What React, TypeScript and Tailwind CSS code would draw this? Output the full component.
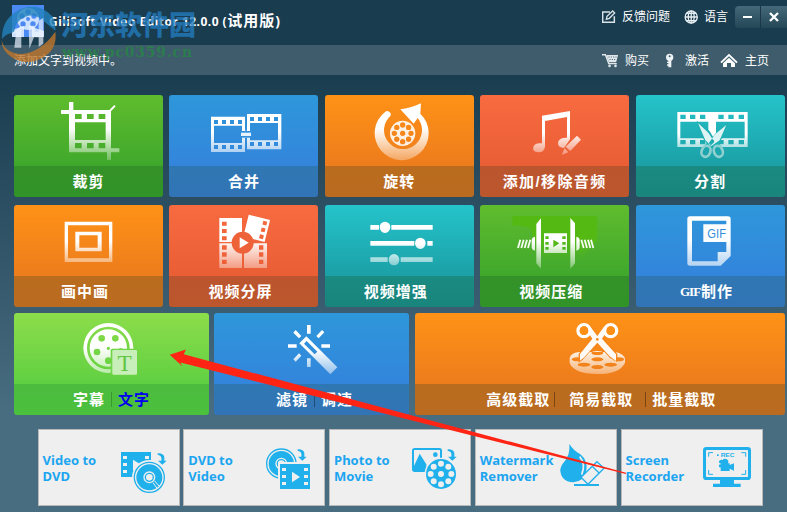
import React from "react";

/* Path helpers: icon art is drawn on a grid of three units per pixel. */
const r = (x: number, y: number, w: number, h: number) => `M${x} ${y}h${w}v${h}h${-w}z`;
const c = (x: number, y: number, q: number, qy: number = q) =>
  `M${x - q} ${y}a${q} ${qy} 0 1 0 ${2 * q} 0a${q} ${qy} 0 1 0 ${-2 * q} 0z`;
const holes = (xs: number[], y: number, w: number, h: number) => xs.map((x) => r(x, y, w, h)).join("");

function Fade({ id, y1, y2, end }: { id: string; y1: number; y2: number; end: number }) {
  return (
    <linearGradient id={id} gradientUnits="userSpaceOnUse" x1="0" x2="0" y1={y1} y2={y2}>
      <stop offset="0" stopColor="#fff" />
      <stop offset="0.45" stopColor="#fff" />
      <stop offset="1" stopColor="#fff" stopOpacity={end} />
    </linearGradient>
  );
}

const tones = {
  green: "from-[#5fbc2d] to-[#3fa82c]",
  blue: "from-[#2e97da] to-[#3385dc]",
  orange: "from-[#ff9216] to-[#ed7c1c]",
  red: "from-[#f86b41] to-[#ea5e35]",
  teal: "from-[#25c3cb] to-[#1ba0a6]",
  lime: "from-[#8cdd4a] to-[#5fd042]",
};
const feet = {
  green: "from-[#349129] to-[#319427]",
  blue: "from-[#2f77b2] to-[#3274b7]",
  orange: "from-[#b96c1e] to-[#bb6b20]",
  red: "from-[#bb552f] to-[#bc562c]",
  teal: "from-[#1a8b82] to-[#19857d]",
  lime: "from-[#4cbb3e] to-[#4bc13d]",
};

type TileProps = {
  tone: keyof typeof tones;
  box: string;
  id: string;
  fade: [number, number, number];
  label: React.ReactNode;
  pad?: string;
  children: React.ReactNode;
};

function Tile({ tone, box, id, fade, label, pad = "", children }: TileProps) {
  return (
    <div className="flex h-[102px] min-w-0 flex-col overflow-hidden rounded-[3px]">
      <div className={`h-[71px] bg-linear-to-b ${tones[tone]}`}>
        <svg viewBox={box} className="block h-[71px] w-full" fill={`url(#${id})`} fillRule="evenodd">
          <defs>
            <Fade id={id} y1={fade[0]} y2={fade[1]} end={fade[2]} />
          </defs>
          {children}
        </svg>
      </div>
      <div
        className={`flex h-[31px] items-center justify-center whitespace-nowrap bg-linear-to-b text-[15px] font-bold leading-none tracking-[1px] text-white ${feet[tone]} ${pad}`}
      >
        {label}
      </div>
    </div>
  );
}

function Sep({ className }: { className: string }) {
  return <span className={`h-[15px] w-px bg-black/35 ${className}`} />;
}

function Card({ first, second, box, children }: { first: string; second: string; box: string; children: React.ReactNode }) {
  return (
    <div className="flex h-[77px] w-[142px] shrink-0 items-center border border-[#b9b9b9] bg-[#efefef]">
      <div className="w-[80px] whitespace-nowrap pl-1 pt-px font-['Noto_Sans','Open_Sans',sans-serif] text-[13px] font-bold leading-4 text-[#1ca5f0]">
        {first}
        <br />
        {second}
      </div>
      <svg viewBox={box} className="block h-[75px] w-[60px] shrink-0" fill="#20b0ec" fillRule="evenodd">
        {children}
      </svg>
    </div>
  );
}

function SmallArrow({ x, y }: { x: number; y: number }) {
  return (
    <path
      transform={`translate(${x} ${y})`}
      d="M0 0Q17 -1 20 11V22H27L14 34L1 22H11Q14 6 0 4z"
    />
  );
}

const reel = [0, 1, 2, 3, 4, 5, 6, 7].map((i) => (i * Math.PI) / 4);

export default function App() {
  return (
    <div className="relative flex h-[512px] w-[787px] flex-col overflow-hidden bg-linear-to-b from-[#1b3d50] from-15% to-[#486c80] to-80% font-['Liberation_Sans','Noto_Sans_CJK_SC',sans-serif] text-xs text-white">
      <header className="flex h-[45px] shrink-0 bg-[#1a3c4f]">
        <div className="ml-3 mt-[5px] h-8 w-8 bg-[#4c8af3]">
          <svg viewBox="0 0 32 32" className="h-8 w-8" fill="#eef5ff" fillRule="evenodd">
            <path d={c(16, 14, 11) + c(16, 14, 2) + c(16, 7, 2.7) + c(22, 11, 2.7) + c(21, 19, 2.7) + c(11, 19, 2.7) + c(10, 11, 2.7)} opacity=".8" />
            <path d="M0 25L12 21V32H0zM20 22L32 26V32H20z" opacity=".8" />
          </svg>
        </div>
        <h1 className="ml-[5px] mt-[10px] w-[250px] whitespace-nowrap font-['Noto_Sans','Noto_Sans_CJK_SC',sans-serif] text-xs font-bold leading-5">
          <span className="tracking-[0.48px]">GiliSoft Video Editor 12.0.0 (</span>
          <span className="text-[15px] tracking-[1px]">试用版</span>
          <span className="text-sm">)</span>
        </h1>
        <div className="ml-auto flex w-[185px]">
          <nav className="flex h-[34px] w-[137px] items-center whitespace-nowrap">
            <svg viewBox="66 30 60 42" className="h-[14px] w-5 shrink-0" fill="none" stroke="#d8e2e7" strokeWidth="4.5">
              <path d="M90 36H68V67H103V49" />
              <path d="M79 58L81 49L98 33L104 39L88 55Z" strokeWidth="4" />
            </svg>
            <span>反馈问题</span>
            <svg viewBox="309 28 61 42" className="ml-3.5 h-[14px] w-5 shrink-0" fill="none" stroke="#e6eef1" strokeWidth="4">
              <circle cx="331" cy="49" r="18.5" />
              <ellipse cx="331" cy="49" rx="9" ry="18" />
              <path d="M331 30V68M312 49H350M316 38H346M316 60H346" />
            </svg>
            <span>语言</span>
          </nav>
          <div className="mt-1.5 flex h-[22px] shrink-0 text-white">
            <button className="flex w-[26px] items-center justify-center rounded-bl rounded-tl border-r border-[#193747] bg-linear-to-b from-[#456979] to-[#244758]">
              <span className="h-0.5 w-[9px] bg-white" />
            </button>
            <button className="flex w-[26px] items-center justify-center bg-linear-to-b from-[#456979] to-[#244758]">
              <svg viewBox="0 0 10 10" className="h-2.5 w-2.5" stroke="#fff" strokeWidth="2.3">
                <path d="M1 1L9 9M9 1L1 9" />
              </svg>
            </button>
          </div>
        </div>
      </header>

      <div className="flex h-[30px] shrink-0 items-center bg-[#3f5c6c] pl-3.5">
        <span className="pt-0.5">添加文字到视频中。</span>
        <nav className="ml-auto flex w-[185px] items-center pt-px">
          <svg viewBox="66 159 70 45" className="h-[15px] w-[23px] shrink-0" fill="#dfe7ea">
            <path d="M66 162H78L88 189H111V193H85L75 166H66z" />
            <path d={"M79 165H115L109 187H87z" + r(86, 169, 3, 3) + r(93, 169, 3, 3) + r(100, 169, 3, 3) + r(107, 169, 3, 3) + r(89, 177, 3, 3) + r(96, 177, 3, 3) + r(103, 177, 3, 3)} fillRule="evenodd" />
            <circle cx="89" cy="198" r="4" />
            <circle cx="107" cy="198" r="4" />
          </svg>
          <span>购买</span>
          <svg viewBox="254 159 63 45" className="ml-[15px] h-[15px] w-[21px] shrink-0" fill="#edf2f4" fillRule="evenodd">
            <path d={c(271, 172, 11) + c(271, 169, 3)} />
            <path d="M267 180H276V202H267V197H263V193H267V189H263V185H267z" />
          </svg>
          <span>激活</span>
          <svg viewBox="422 159 75 45" className="ml-[11px] h-[15px] w-[25px] shrink-0" fill="#fff">
            <path d="M449 161L475 186L471 190L449 169L427 190L423 186z" />
            <path d="M431 190L449 173L467 190V201H455V189H443V201H431z" />
          </svg>
          <span>主页</span>
        </nav>
      </div>

      <main className="flex flex-col pl-3.5 pr-0.5 pt-5">
        <div className="grid grid-cols-[149px_149px_149px_149px_149px] gap-x-[6.4px] gap-y-2">
          <Tile tone="green" box="42 15 447 213" id="crop" fade={[36, 210, 0.25]} label="裁剪">
            <path d={"M207 36H220V60H328L343 45L347 49L333 64V175H358V187H333V210H321V187H207V72H183V60H207z" + r(225, 97, 92, 53) + holes([225, 261, 296], 72, 20, 15) + holes([225, 261, 296], 159, 20, 16)} />
          </Tile>
          <Tile tone="blue" box="507 15 447 213" id="merge" fade={[72, 188, 0.6]} label="合并">
            <path d={"M633 80H735V122H741V72H844V178H741V143H735V186H633z" + r(642, 107, 84, 52) + r(750, 99, 84, 52) + holes([642, 666, 690, 714], 90, 12, 12) + holes([642, 666, 690, 714], 165, 12, 12) + holes([750, 774, 798, 822], 81, 12, 12) + holes([750, 774, 798, 822], 156, 12, 12)} />
            <rect x="718" y="123" width="39" height="20" fill="#318fdb" />
            <rect x="723" y="128" width="30" height="10" fill="#e8f2fc" />
          </Tile>
          <Tile tone="orange" box="21 15 447 213" id="rotate" fade={[40, 205, 0.35]} label="旋转">
            <path d="M202 65Q210 60 218 70V77A57 57 0 1 0 299 84L287 101L247 58Q276 55 309 40L307 71A81 81 0 1 1 202 65z" />
            <path d={c(254, 130, 38) + c(254, 130, 8) + reel.map((a) => c(254 + 25 * Math.cos(a), 130 + 25 * Math.sin(a), 8)).join("")} fill="#fff" opacity=".88" />
          </Tile>
          <Tile tone="red" box="486 15 447 213" id="audio" fade={[62, 210, 0.2]} label={<span className="tracking-[1.4px]">添加/移除音频</span>}>
            <path d="M672 77L756 63V148L738 174Q719 172 720 158Q723 142 747 143V81L681 93V170Q678 188 660 187Q642 185 646 171Q650 157 672 160z" />
            <path d="M777 137L789 149L757 183L743 170zM740 175L751 187L731 195z" opacity=".95" />
          </Tile>
          <Tile tone="teal" box="18 15 447 213" id="split" fade={[66, 210, 0.3]} label="分割">
            <path d={r(142, 66, 211, 105) + r(151, 95, 84, 50) + r(258, 95, 86, 50) + holes([151, 180, 210, 265, 295, 326], 74, 16, 13) + holes([151, 180, 210, 265, 295, 326], 150, 16, 13)} />
            <path d="M200 92L238 122L249 140L260 126L294 96L284 133L266 160L276 171H220L230 160L209 131Z" fill="#1fb0b5" />
            <path d="M238 95H258V118L249 135L238 118z" fill="#fff" />
            <path d="M204 99L235 128L253 156L243 166L226 151zM289 105L256 132L235 161L244 168L269 151z" fill="#fff" opacity=".85" />
            <g fill="none" stroke="#8fd0d0" strokeWidth="8">
              <ellipse cx="228" cy="184" rx="13" ry="17" transform="rotate(22 228 184)" />
              <ellipse cx="265" cy="184" rx="13" ry="17" transform="rotate(-22 265 184)" />
            </g>
            <circle cx="248" cy="153" r="3.5" fill="#1aa5aa" />
          </Tile>

          <Tile tone="orange" box="42 15 447 213" id="pip" fade={[64, 195, 0.35]} label="画中画" pad="pr-[7px]">
            <path d={r(194, 65, 143, 121) + r(204, 76, 123, 99) + r(226, 95, 79, 59) + r(238, 106, 55, 37)} />
          </Tile>
          <Tile tone="red" box="507 15 447 213" id="grid" fade={[42, 215, 0.3]} label="视频分屏" pad="pr-[7px]">
            <path d={r(658, 54, 68, 72) + holes([666], 65, 14, 12) + holes([666], 87, 14, 12) + holes([666], 109, 14, 12)} />
            <path d={r(658, 130, 68, 74) + holes([666], 136, 14, 13) + holes([666], 157, 14, 13) + holes([666], 179, 14, 13)} />
            <path d={r(732, 130, 69, 74) + holes([777], 136, 13, 13) + holes([777], 157, 13, 13) + holes([777], 179, 13, 13)} />
            <path transform="rotate(14 770 85)" d={r(737, 51, 66, 68) + holes([784], 58, 12, 12) + holes([784], 79, 12, 12) + holes([784], 100, 12, 12)} />
            <circle cx="728" cy="128" r="33" fill="#ed6239" />
            <path d="M719 112L746 128L719 145z" fill="#fff" />
          </Tile>
          <Tile tone="teal" box="21 15 447 213" id="enhance" fade={[64, 210, 0.35]} label="视频增强" pad="pr-[7px]">
            <path d={r(157, 75, 26, 14) + r(220, 75, 124, 14) + c(201, 82, 16, 17)} />
            <path d={r(157, 123, 132, 14) + r(328, 123, 16, 14) + c(307, 130, 16, 17)} />
            <path d={r(157, 172, 52, 14) + r(248, 172, 96, 14) + c(228, 179, 16, 17)} />
          </Tile>
          <Tile tone="green" box="486 15 447 213" id="compress" fade={[54, 210, 0.3]} label="视频压缩" pad="pr-[7px]">
            <defs>
              <linearGradient id="patch" x1="0" x2="0" y1="0" y2="1">
                <stop offset="0.5" stopColor="#55b914" />
                <stop offset="1" stopColor="#55b914" stopOpacity="0" />
              </linearGradient>
            </defs>
            <path d="M583 48H837V124L815 143L790 180H680L650 120L636 84L605 76L583 78z" fill="url(#patch)" />
            <path d="M669 55V206L655 190V72zM757 54L771 70V190L757 206z" />
            <path d={r(678, 100, 69, 59) + holes([682, 733], 109, 10, 8) + holes([682, 733], 126, 10, 8) + holes([682, 733], 141, 10, 8) + "M706 119L724 130L706 142z"} />
            <path d="M651 110Q641 112 641 120V143Q642 150 651 152zM775 110Q785 112 785 120V143Q784 150 775 152z" />
            <g stroke="#f4fcef" strokeWidth="5.5" fill="none">
              <path d="M600 144L607 119M610 144L617 119M620 144L627 119M630 144L637 119M790 119L797 144M800 119L807 144M810 119L817 144M819 119L826 144" />
            </g>
          </Tile>
          <Tile
            tone="blue"
            box="18 345 447 213"
            id="gif"
            fade={[378, 535, 0.6]}
            pad="pr-[7px]"
            label={
              <>
                <span className="font-['Liberation_Serif',serif] text-[13px] tracking-[-1px]">GIF</span>
                <span className="ml-px">制作</span>
              </>
            }
          >
            <path d="M180 379H294Q302 379 302 387V498L272 527H180Q172 527 172 519V387Q172 379 180 379zM186 392V514H263V486H289V456H220V403H289V392z" />
            <text x="232" y="444" fontSize="39" fill="#318ddb" fontFamily="Liberation Sans, sans-serif" textLength="56" lengthAdjust="spacingAndGlyphs">GIF</text>
          </Tile>
        </div>

        <div className="mt-1.5 grid grid-cols-[195px_195px_370px] gap-x-[5.4px]">
          <Tile
            tone="lime"
            box="42 15 585 213"
            id="subtitle"
            fade={[45, 205, 0.5]}
            label={
              <>
                字幕
                <Sep className="mx-1.5 opacity-60" />
                <span className="text-[#0000f0]">文字</span>
              </>
            }
          >
            <path d={c(325, 120, 75) + c(325, 120, 64)} />
            <path d={c(325, 120, 56) + c(305, 91, 10) + c(346, 91, 10) + c(291, 132, 10) + c(325, 158, 10) + c(325, 121, 5) + c(362, 131, 10)} />
            <rect x="332" y="122" width="81" height="80" rx="5" fill="#71d548" />
            <rect x="337" y="126" width="74" height="74" rx="4" fill="#c8efb9" />
            <text x="374" y="188" textAnchor="middle" fontSize="70" fontFamily="Liberation Serif, serif" fill="#62c644">T</text>
          </Tile>
          <Tile
            tone="blue"
            box="642 15 585 213"
            id="wand"
            fade={[52, 215, 0.35]}
            pad="pl-[5px]"
            label={
              <>
                滤镜
                <Sep className="mx-1.5" />
                调速
              </>
            }
          >
            <path d="M919 85L1012 178L991 199L898 106zM920 99L912 107L944 139L952 131z" />
            <path d={r(921, 51, 11, 26) + r(921, 151, 11, 26) + r(864, 109, 26, 10) + r(964, 109, 26, 10)} />
            <path d="M887 66L904 84L897 91L880 74zM966 66L973 73L956 91L949 84zM897 136L904 143L887 161L880 154z" />
          </Tile>
          <Tile
            tone="orange"
            box="21 15 1110 213"
            id="cut"
            fade={[45, 215, 0.3]}
            label={
              <div className="flex items-center pl-[3px]">
                高级截取
                <Sep className="ml-1 mr-3.5" />
                简易截取
                <Sep className="ml-3 mr-1.5" />
                批量截取
              </div>
            }
          >
            <path d={"M485 150Q489 133 516 132H620Q650 137 651 154V164Q636 198 568 198Q494 196 485 164z" + c(508, 154, 17, 6) + c(568, 135, 18, 6) + c(632, 154, 16, 6) + c(568, 154, 18, 6) + c(528, 170, 19, 6) + c(608, 170, 19, 6) + c(568, 177, 18, 6)} opacity=".95" />
            <path d="M512 138L562 76H575L628 138V162L606 150L568 108L528 151L512 165z" fill="#f5851a" />
            <path d="M516 158V138L553 92L536 66L547 56L568 84L588 56L599 66L582 92L624 139V159L605 145L568 104L530 146z" fill="#fff" opacity=".96" />
            <g fill="none" stroke="#fff" strokeWidth="10">
              <circle cx="528" cy="68" r="18" />
              <circle cx="608" cy="68" r="18" />
            </g>
            <circle cx="528" cy="68" r="13" fill="#fd8f17" />
            <circle cx="608" cy="68" r="13" fill="#fd8f17" />
            <circle cx="568" cy="94" r="4" fill="#f58718" />
          </Tile>
        </div>
      </main>

      <footer className="mt-3.5 flex gap-[3.75px] pl-[37.6px]">
        <Card first="Video to" second="DVD" box="267 24 180 225">
          <path d={r(273, 90, 90, 75) + holes([279, 345], 102, 12, 9) + r(279, 123, 12, 9) + r(279, 144, 12, 9) + "M309 113L336 130L309 146z"} />
          <circle cx="358" cy="166" r="52" fill="#efefef" />
          <path d={c(358, 166, 47) + c(358, 166, 43)} />
          <path d={c(358, 166, 39) + c(358, 166, 18)} />
          <path d={c(358, 166, 14) + c(358, 166, 10)} />
          <path d="M369 182L382 200M374 177L389 194" stroke="#efefef" strokeWidth="3" />
          <SmallArrow x={383} y={94} />
        </Card>
        <Card first="DVD to" second="Video" box="702 24 180 225">
          <path d={c(754, 125, 46) + c(754, 125, 42)} />
          <path d={c(754, 125, 38) + c(754, 125, 18)} />
          <path d={c(754, 125, 14) + c(754, 125, 10)} />
          <rect x="744" y="120" width="100" height="86" fill="#efefef" />
          <path d={r(750, 126, 90, 75) + holes([756, 822], 138, 12, 9) + holes([756, 822], 159, 12, 9) + holes([756, 822], 180, 12, 9) + "M786 149L810 165L786 181z"} />
          <SmallArrow x={803} y={82} />
        </Card>
        <Card first="Photo to" second="Movie" box="255 24 180 225">
          <path d="M261 86Q261 78 269 78H343Q351 78 351 86V108H345V84H267V132L284 95L304 127V150H269Q261 150 261 142z" />
          <circle cx="331" cy="98" r="7" />
          <circle cx="348" cy="156" r="49" fill="#efefef" />
          <path d={c(348, 156, 45) + c(348, 156, 9) + reel.map((a) => c(348 + 31 * Math.cos(a), 156 + 31 * Math.sin(a), 9)).join("")} />
          <SmallArrow x={368} y={82} />
        </Card>
        <Card first="Watermark" second="Remover" box="693 24 180 225">
          <path d="M733 66Q746 86 766 97Q789 116 784 145Q778 179 745 181Q710 180 706 147Q705 133 718 119Q736 98 733 66z" />
          <path d="M764 104Q783 126 770 158" fill="none" stroke="#efefef" strokeWidth="5" />
          <path d="M816 119L837 139L789 187L768 166z" fill="#efefef" stroke="#20b0ec" strokeWidth="4" />
          <path d="M803 134L823 154" stroke="#20b0ec" strokeWidth="4" />
          <path d={r(747, 186, 75, 6)} />
        </Card>
        <Card first="Screen" second="Recorder" box="276 24 180 225">
          <path d="M289 75H413Q423 75 423 85V164Q423 174 413 174H372V185H392V195H309V185H330V174H289Q279 174 279 164V85Q279 75 289 75zM290 84Q288 84 288 86V163Q288 165 290 165H412Q414 165 414 163V86Q414 84 412 84z" />
          <path d="M309 92H296V104M394 92H407V104M296 144V157H309M407 144V157H394" fill="none" stroke="#20b0ec" strokeWidth="3" />
          <rect x="321" y="97" width="5" height="5" />
          <text x="332" y="105" fontSize="16" fontWeight="bold" textLength="41" lengthAdjust="spacingAndGlyphs" fontFamily="Liberation Sans, sans-serif">REC</text>
          <path d="M335 126Q326 124 327 118Q330 112 338 114Q341 108 349 111Q358 115 354 124H359V129L372 124V146L359 140V147H332V136H327V128z" />
        </Card>
      </footer>

      <div className="pointer-events-none absolute left-0 top-0 opacity-80">
        <svg viewBox="0 0 180 195" className="absolute left-0 top-0 h-[65px] w-[60px]">
          <path d="M6 118Q4 55 62 27Q118 6 158 50Q168 68 166 92L130 62Q95 32 60 60Q42 76 43 97Q15 102 6 118z" fill="#2383bd" />
          <path d="M5 121Q14 161 66 162Q122 157 166 95Q173 148 128 173Q83 198 38 174Q4 151 5 121z" fill="#bf762a" />
          <path d="M34 101L64 77V143H43L48 100zM86 77H104V95H116V62L130 54V131L116 140V112H102L88 146z" fill="#edf5ff" opacity=".85" />
        </svg>
        <span className="absolute left-[61px] top-[9px] whitespace-nowrap font-['Noto_Sans_CJK_SC',sans-serif] text-[27px] font-black leading-[30px] text-[#237bbd]">
          河东软件园
        </span>
        <span className="absolute left-[62px] top-[42px] whitespace-nowrap font-['DejaVu_Serif',serif] text-[14px] font-bold leading-5 tracking-[0.8px] text-[#278447]">
          www.pc0359.cn
        </span>
      </div>

      <svg viewBox="0 0 787 512" className="pointer-events-none absolute inset-0 h-[512px] w-[787px]" fill="#ff2414">
        <path d="M169.7 354.7L186 349.5L183.7 354.3L626 472.7V474L180.3 362.5L182.3 366.3z" />
      </svg>
    </div>
  );
}
